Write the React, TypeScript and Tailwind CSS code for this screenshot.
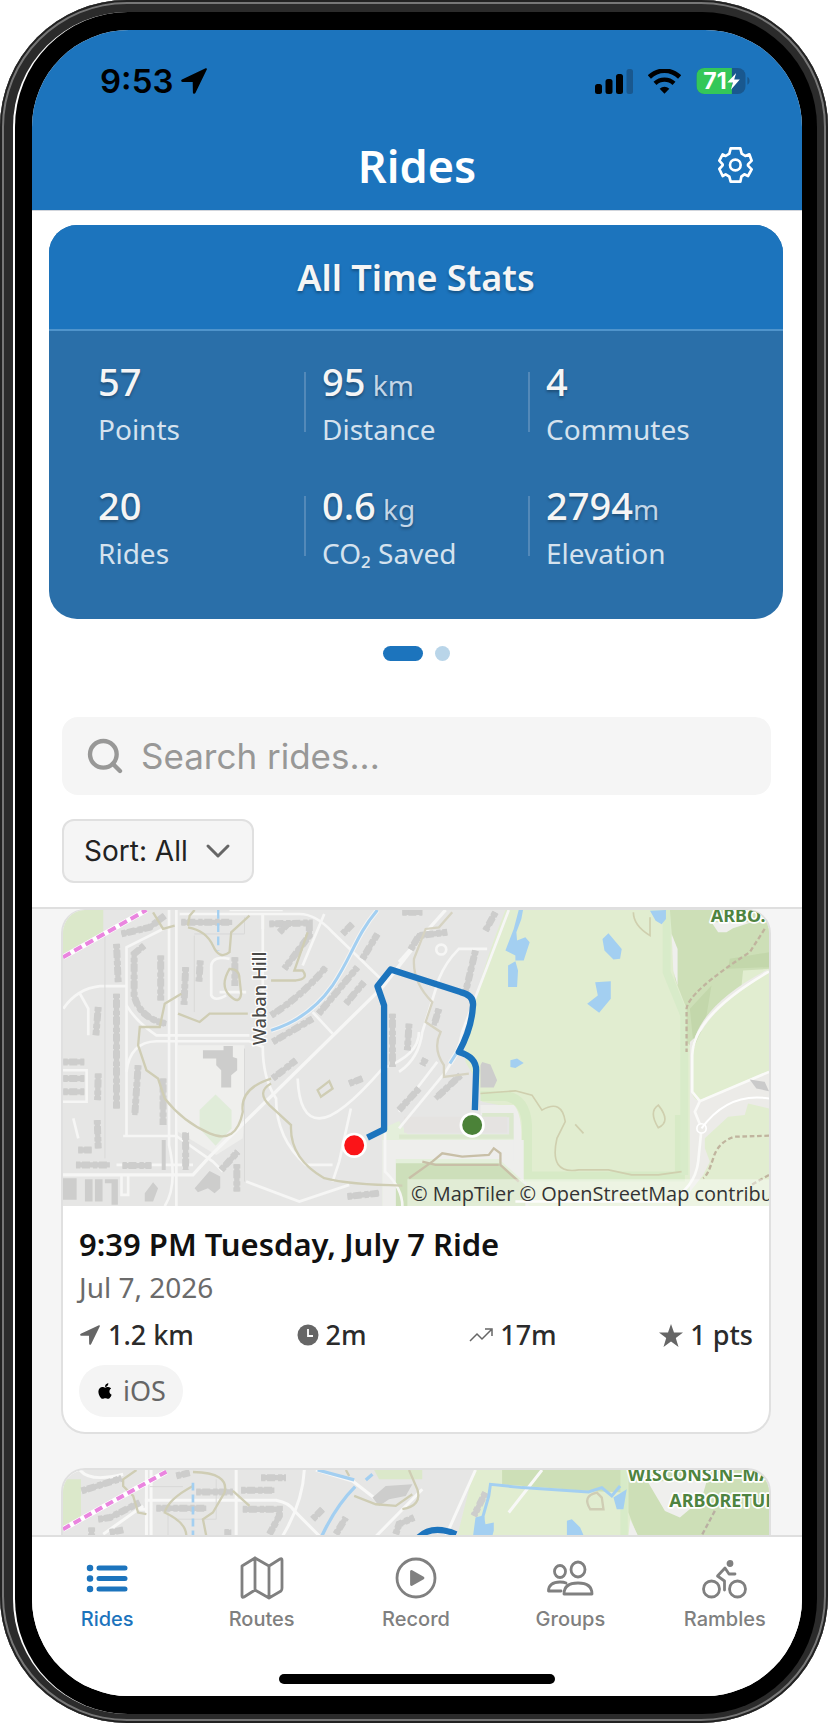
import { ChevronDown, Search } from "lucide-react";
import { FaApple } from "react-icons/fa";
import type { ReactNode } from "react";

const totals = [
  { value: "57", unit: "", label: "Points" },
  { value: "95", unit: " km", label: "Distance" },
  { value: "4", unit: "", label: "Commutes" },
  { value: "20", unit: "", label: "Rides" },
  { value: "0.6", unit: " kg", label: "CO₂ Saved" },
  { value: "2794", unit: "m", label: "Elevation" },
];

function ArrowIcon({ className }: { className?: string }) {
  return (
    <svg viewBox="0 0 26 26" className={className} fill="currentColor">
      <path d="M24.6.3 1 11.4c-1.300.7-1 2.400.5 2.500l10.200.2.200 10.300c0 1.500 1.900 1.900 2.500.6L25.800 1.600c.4-.9-.3-1.700-1.200-1.300Z" />
    </svg>
  );
}

function StatusBar() {
  return (
    <div className="flex h-[102px] items-center justify-between pl-[68px] pr-[52px] text-black">
      <div className="flex items-center gap-[8px]">
        <span className="font-['Inter',sans-serif] text-[33px] font-semibold leading-none">9:53</span>
        <ArrowIcon className="h-[26px] w-[26px]" />
      </div>
      <div className="flex items-center gap-[15px]">
        {/* Signal */}
        <svg viewBox="0 0 38 25" className="h-[25px] w-[38px]">
          <rect x="0" y="15" width="7" height="10" rx="2.500" />
          <rect x="10.500" y="10" width="7" height="15" rx="2.500" />
          <rect x="21" y="5" width="7" height="20" rx="2.500" />
          <rect x="31.500" y="0" width="6.500" height="25" rx="2.500" fill="#19588f" />
        </svg>
        {/* Wifi */}
        <svg viewBox="0 0 99 75" className="h-[25px] w-[33px]">
          <path d="M4 24C30-1 69-1 95 24" fill="none" stroke="black" strokeWidth="14" />
          <path d="M21 43c16-15 41-15 57 0" fill="none" stroke="black" strokeWidth="13" />
          <path d="M35 59c9-8 20-8 29 0L49.500 74Z" />
        </svg>
        {/* Battery */}
        <svg viewBox="0 0 162 79" className="h-[26px] w-[54px]">
          <clipPath id="battery">
            <rect width="150" height="79" rx="24" />
          </clipPath>
          <g clipPath="url(#battery)">
            <rect width="150" height="79" fill="#19588f" />
            <rect width="108" height="79" fill="#34c759" />
          </g>
          <path d="M155 27c9 3 9 21 0 24Z" fill="#19588f" />
          <text x="21" y="64" fill="white" fontFamily="Inter, sans-serif" fontWeight="700" fontSize="70">
            71
          </text>
          <path d="M121 15 94 44h17l-6 22 27-31h-17Z" fill="white" />
        </svg>
      </div>
    </div>
  );
}

function Header() {
  return (
    <header className="shrink-0 border-b border-gray-300 bg-[#1c74bd]">
      <StatusBar />
      <div className="grid h-[78px] grid-cols-3 items-center px-[49px] pb-[12px] text-white">
        <h1 className="col-start-2 text-center text-[45px] font-semibold leading-none">Rides</h1>
        <button aria-label="Settings" className="justify-self-end">
          <svg viewBox="0 0 105 108" className="h-[36px] w-[35px]" fill="none" stroke="currentColor" strokeWidth="8" strokeLinejoin="round">
            <path d="M38 4h29l4 16 11 7 12-5 7 19-11 11v4l11 11-11 20-11-5-9 7-3 15H38l-4-15-11-7-9 5L4 66l10-11v-3L4 41l10-19 9 5 11-7Z" />
            <circle cx="52" cy="54" r="16" />
          </svg>
        </button>
      </div>
    </header>
  );
}

function StatsCard() {
  return (
    <section className="mt-[14px] mr-[19px] ml-[17px] overflow-hidden rounded-[28px] bg-[#2a6fa9] text-[#f5f5f5]">
      <h2 className="border-b-2 border-[#4f94cc] bg-[#1c74bd] pt-[33px] pb-[31px] text-center text-[36px] font-semibold leading-[40px] text-shadow-[0_2px_3px_rgb(0_0_0/0.3)]">
        All Time Stats
      </h2>
      <div className="grid grid-cols-3 gap-y-[30px] px-[31px] pt-[24px] pb-[46px]">
        {totals.map((total, i) => (
          <div key={total.label} className="flex items-center gap-4">
            <span className={i % 3 === 0 ? "h-[60px] w-[2px]" : "h-[60px] w-[2px] bg-[#5389b9]"} />
            <div>
              <p className="h-[54px] text-[38px] leading-[52px] font-medium text-shadow-[0_2px_3px_rgb(0_0_0/0.3)]">
                {total.value}
                <span className="text-[28px] font-normal whitespace-pre text-[#c3d6e7]">{total.unit}</span>
              </p>
              <p className="h-[40px] text-[28px] leading-[40px] text-[#d5e2ee]">{total.label}</p>
            </div>
          </div>
        ))}
      </div>
    </section>
  );
}

function Filters() {
  return (
    <div className="border-b-2 border-[#dfdfdf] pr-[31px] pb-[24px] pl-[30px] font-['Inter',sans-serif]">
      <label className="flex h-[78px] items-center gap-[16px] rounded-2xl bg-[#f5f5f5] px-[23px] text-[#989897]">
        <Search className="size-[40px]" strokeWidth={2.6} />
        <input
          type="text"
          aria-label="Search rides"
          placeholder="Search rides..."
          className="min-w-0 flex-1 bg-transparent text-[35px] leading-none outline-none placeholder:text-[#989897]"
        />
      </label>
      <div className="relative mt-[24px] w-[192px]">
        <select
          aria-label="Sort rides"
          className="h-[64px] w-full appearance-none rounded-xl border-2 border-[#e0e0e0] bg-[#f5f5f5] pl-[20px] text-[28px] text-[#222]"
        >
          <option>Sort: All</option>
          <option>Sort: Newest</option>
        </select>
        <ChevronDown className="pointer-events-none absolute top-3 right-4 size-[40px] text-[#666]" strokeWidth={1.8} />
      </div>
    </div>
  );
}

// Building rows: a solid core with a dashed, wider stroke gives the ragged outline
function Buildings({ d }: { d: string }) {
  return (
    <g fill="none" stroke="#cdcdcc">
      <path d={d} strokeWidth="16" />
      <path d={d} strokeWidth="21" strokeDasharray="13 5 24 9" />
    </g>
  );
}

function RideMap() {
  return (
    <svg viewBox="39 33 2124 891" className="block w-full" preserveAspectRatio="xMidYMid slice">
      <rect x="39" y="33" width="2124" height="891" fill="#e6e6e5" />
      <path d="M385 440H585V640L580 720 500 770 385 700Z" fill="#efefed" />
      <path d="M39 33H160V98L39 165Z" fill="#dbe8ca" />
      <path d="M498 588 546 635V690L498 742 450 690V635Z" fill="#e0ecd9" />

      {/* Parkland */}
      <path d="M1000 690 1050 668 1075 708H1425V924H1000Z" fill="#e4efdb" />
      <path d="M1370 33H2163V924H1440L1425 780 1400 630 1300 610 1290 560 1250 490Q1240 430 1272 330Q1310 180 1370 33Z" fill="#e1edd0" />
      <path d="M1295 593H1370Q1430 600 1435 680V835H1895V650" fill="none" stroke="#d7eac6" strokeWidth="30" />
      <path d="M1855 33V220L1908 350V830" fill="none" stroke="#d8ebc9" strokeWidth="24" />
      <path d="M1865 33H2163V210L2085 215 2080 265 1985 360 1935 450 1915 430V330L1880 240Z" fill="#cddfb7" />
      <path d="M2045 180 2163 160V205L2040 210ZM1925 330 1990 260 1975 350 1935 430Z" fill="#c3d7ab" />
      <path d="M1870 105 1888 150V260L1875 215ZM1990 70H2110L2055 88 2035 100H2010Z" fill="#efefed" />
      <path d="M1040 795H1350L1430 860V924H1040Z" fill="#cddfba" />
      <path d="M1000 725H1425V850L1350 782H1040V924H1000Z" fill="#eeeeec" />
      <path d="M1295 620H1395Q1415 640 1418 700V790H1395V650H1295Z" fill="#eeeeec" />
      <path d="M1300 650H1388V715H1050" fill="none" stroke="#dbe8ce" strokeWidth="13" />
      <path d="M1065 655H1375V703H1065Z" fill="#e5e3e1" />

      {/* Eastern roads */}
      <path d="M2163 210Q1930 330 1928 480V570Q1935 610 1955 605L2163 517V630L2100 615 2090 650 2040 655 1970 720V750L1985 790 1965 830 1910 900H1925V430Z" fill="#ecebe8" />
      <path d="M2163 222Q1945 350 1936 470V570L1955 600 2163 512Z" fill="#e1edd0" />
      <path d="M2163 218Q1935 350 1932 470V580L1955 608 2163 520M1955 608 1940 640 1960 690 1950 790Q1940 870 1860 910H1400" fill="none" stroke="#fafaf8" strokeWidth="8" />
      <circle cx="1960" cy="690" r="14" fill="#ecebe8" stroke="white" strokeWidth="5" />
      <path d="M1960 690Q2040 580 2163 600" fill="none" stroke="white" strokeWidth="6" />
      <path d="M2105 543 2150 550 2163 578 2125 570Z" fill="#cacaca" />

      {/* Local streets */}
      <g fill="none" stroke="#f6f6f5" strokeWidth="8">
        <path d="M358 33V740Q385 860 345 924M380 33V924" />
        <path d="M230 713V145L340 90M390 45H750Q800 45 850 100L1000 245M640 45V430" />
        <path d="M40 330Q80 270 150 262H230M90 285 115 330V410M230 320Q260 370 320 410H600M230 520Q240 430 320 428H600L640 445Q640 540 680 600Q680 720 770 800H850" />
        <path d="M1110 125 1000 265M1000 265 480 775 430 830H39M1190 33 1050 190" strokeWidth="10" />
        <path d="M220 713H380L490 790 520 820M485 200V290Q495 310 530 290M485 200Q490 170 540 180M510 280H590M640 90V45" />
        <path d="M745 540Q750 660 810 660T1000 510Q1110 470 1110 400M905 630 870 790 850 850M590 850 750 910 900 860M825 45 760 200M790 340 850 405M1008 700V820Q1060 870 1060 924" />
        <path d="M39 515H110V610H39M70 660 85 720M215 830V890H235V830M200 800H430M540 33 700 33" />
        <path d="M1380 33 1240 400Q1230 460 1190 520L1050 690M1165 490 1050 640M1315 150H1230Q1190 190 1170 240L1120 400Q1110 480 1050 520" />
        <circle cx="1177" cy="152" r="15" />
      </g>
      <path d="M165 110V780M434 110V340M434 105H585V55M585 450V850" fill="none" stroke="#d9d9d8" strokeWidth="3" />

      <Buildings d="M200 135 205 250M200 285V630M283 140 253 165V290Q270 360 350 375M333 170V305M215 105 300 85 345 50M395 70H548M408 205 403 318M452 185 448 248M556 175V262M660 75 780 72V110L705 210M145 325 138 410M145 525 143 605M142 665 145 750M340 540V680M265 500 255 650" />
      <Buildings d="M665 350Q760 290 830 205M670 430 790 360M808 345 925 205M890 315 945 250M880 105 910 75M940 180 985 105M690 100 720 70M40 490H103M40 540H103M40 580H103M85 755H125M78 800H180M218 802H305M398 712H418M408 712V815M515 815 565 760M562 798V880" />
      <Buildings d="M895 895 990 885M900 555 940 540M1030 345V505M1080 375 1075 455M1110 570 1050 635M670 540 740 485M1085 152 1110 110 1195 100M1280 155 1250 280M1340 40 1310 95M1170 330 1155 380M1130 480 1120 500M1235 530 1160 600M1060 40H1120" />
      <path d="M460 455H522V442H550V475L563 480V515L545 530V567H515V515L500 500V480H460ZM435 870 480 818 512 835V870L495 885 475 870 445 882ZM39 840H80V905H39ZM105 843H128V910H105ZM135 843H158V910H135ZM165 843H204V920H185V855H165ZM285 910V885L310 852 325 870 310 910ZM336 725H348V815H336ZM1300 490 1325 498 1345 545 1335 567H1295V500Z" fill="#cdcdcc" />

      {/* Footpaths */}
      <g fill="none" stroke="#cfcdb4" strokeWidth="7">
        <path d="M310 40 340 90 375 80M415 80 420 50 435 33M415 85Q470 95 490 140T540 160L545 100 600 50M385 345 450 370 480 345H595M665 245H740Q780 240 760 215H735L775 100M395 285 345 315 330 385H270L265 440 290 515 325 540 345 600Q400 670 480 705T580 640Q570 570 665 540M665 555Q620 580 660 620L725 680Q720 780 825 840Q900 860 1060 862M540 210Q510 260 540 290T575 285L570 240Q570 210 540 210ZM840 548 805 575 815 595 850 570Z" />
        <path d="M1210 40 1170 85 1130 90 1095 180Q1090 250 1150 310L1130 370 1175 400Q1150 450 1185 500V535L1260 525" stroke="#d6d3c2" />
        <path d="M1295 585 1400 577 1450 590 1480 635Q1540 600 1550 670L1525 720Q1500 830 1590 815H1680L1750 830H1830L1900 820" stroke="#cfcfae" strokeWidth="5" />
        <path d="M1755 40Q1755 80 1805 110V55M1830 620Q1800 640 1830 688Q1870 670 1830 620ZM1580 678 1605 705" stroke="#cfcfae" strokeWidth="5" />
        <path d="M1080 840 1150 790M1150 790 1180 765 1240 775 1320 770 1335 750 1355 765V800L1410 850M1120 790 1160 800H1350" stroke="#c8bfa7" />
        <path d="M2150 90 2105 160Q1920 280 1915 330V460M2163 712 2060 715Q2010 730 1995 780T1965 840M2163 830 2110 860" stroke="#c0b49e" strokeDasharray="14 8" />
      </g>

      {/* Water */}
      <path d="M1410 33H1423L1418 60 1403 100 1405 125 1430 115 1443 130 1425 185H1400V170L1370 155 1395 90ZM1378 200 1400 187 1408 215 1405 265H1378ZM1680 103 1720 150 1715 180 1695 182 1668 155 1662 120ZM1640 250 1687 247V300L1652 342 1616 315 1648 290ZM1385 485 1405 480 1425 493 1400 508 1385 505ZM1805 35 1853 33V60L1840 76 1822 65Z" fill="#a3cff1" />
      <path d="M506 33V155" stroke="#a3cff1" strokeWidth="7" strokeDasharray="26 14" />
      <path d="M985 33C920 110 910 170 850 260Q780 360 665 395M1225 460 1203 495" fill="none" stroke="#f4f4f3" strokeWidth="15" />
      <path d="M985 33C920 110 910 170 850 260Q780 360 665 395M1225 460 1203 495" fill="none" stroke="#a3cff1" strokeWidth="9" />

      {/* Bike path */}
      <path d="M39 175 290 33" stroke="white" strokeWidth="16" />
      <path d="M39 175 290 33" stroke="#ea85df" strokeWidth="12" strokeDasharray="26 13" />

      <g fontFamily="'Noto Sans', sans-serif" paintOrder="stroke" stroke="white" strokeLinejoin="round">
        <text transform="translate(650 440) rotate(-90)" fontSize="55" fontWeight="500" fill="#4a4a48" strokeWidth="8">
          Waban Hill
        </text>
        <text x="1988" y="68" fontSize="54" fontWeight="700" fill="#4e8440" strokeWidth="10">
          ARBO.
        </text>
      </g>

      <path d="M955 718 1005 693V320L985 262 1025 212 1235 280Q1278 290 1272 325Q1268 390 1230 460Q1282 475 1282 515L1278 635" fill="none" stroke="#1c74bd" strokeWidth="19" strokeLinejoin="round" />
      <circle cx="915" cy="741" r="34" fill="#fb1418" stroke="white" strokeWidth="8" />
      <circle cx="1270" cy="680" r="34" fill="#4b8238" stroke="white" strokeWidth="8" />

      <rect x="1075" y="843" width="1088" height="81" fill="white" fillOpacity="0.4" />
      <text x="1086" y="908" fontFamily="'Open Sans', 'Noto Sans', sans-serif" fontSize="60" fill="#333">
        © MapTiler © OpenStreetMap contribu
      </text>
    </svg>
  );
}

function NextRideMap() {
  return (
    <svg viewBox="39 42 2124 891" className="block w-full" preserveAspectRatio="xMidYMid slice">
      <rect x="39" y="42" width="2124" height="891" fill="#e6e6e5" />
      <path d="M39 70H93V185L39 215ZM975 42H1120V70H990Z" fill="#dbe8ca" />
      <path d="M1275 42H2163V300H1200L1225 242Z" fill="#e1edd0" />
      <path d="M1360 42H1730V110L1620 105 1360 85ZM1740 42H2163V300H1790L1740 170Z" fill="#cddfb7" />
      <path d="M1727 42V300" stroke="#d7ebc8" strokeWidth="22" />
      <path d="M1800 80 1980 60 1960 130 1895 185 1850 165ZM1745 190 1770 242H1740Z" fill="#efefed" />

      {/* Streets */}
      <g fill="none" stroke="#f8f8f7" strokeWidth="9">
        <path d="M290 42V300M304 42V300M285 133H680Q720 140 735 165L810 240M560 42V240M765 42Q760 140 700 240M800 42 910 75 1000 145M1120 100 980 242M1280 42 1190 242M270 160H290M160 235 280 150M90 42Q120 80 220 55M1480 42 1380 170" />
      </g>
      <path d="M300 92H400M355 160V240M500 70V190H380" fill="none" stroke="#d9d9d8" strokeWidth="3" />

      <Buildings d="M95 105 215 67M145 190 180 185 270 140M440 108H550M575 103H675M320 157H470M580 160H690V180L660 235M635 65H710M380 60 420 50M180 230 220 222M125 215V240M790 190 820 160M860 235 890 185M1040 235 1050 205 1095 185M1310 110 1275 180M525 230H545" />
      <path d="M970 125 1010 90 1090 85 1070 120 1020 130 990 150Z" fill="#cdcdcc" />

      {/* Footpaths */}
      <g fill="none" stroke="#cfcdb4" strokeWidth="7">
        <path d="M260 42 220 70V90L250 120 265 170 290 175M430 48Q540 50 525 110L490 170 460 190 470 240M410 240Q410 200 345 170 355 130 430 90M550 105 600 150M890 42 900 60M915 120 980 145 1040 150 1090 115M1080 42 1105 100Q1120 150 1060 160" />
        <path d="M1645 110Q1600 120 1625 160H1665L1660 125Z" />
        <path d="M2000 165 1960 240" stroke="#b9afa2" strokeDasharray="14 8" />
      </g>

      {/* Water */}
      <path d="M430 80V240" stroke="#a3cff1" strokeWidth="8" strokeDasharray="24 12" />
      <path d="M918 92Q860 150 818 240M805 42 915 72M950 72 970 55" fill="none" stroke="#a3cff1" strokeWidth="10" />
      <path d="M1300 220 1303 180 1320 120 1325 85 1420 95 1620 108 1660 95 1690 120 1715 90" fill="none" stroke="#a3cff1" strokeWidth="9" />
      <path d="M1280 185 1305 178 1310 205 1335 200V225L1325 260H1270ZM1555 195 1570 190 1595 215 1610 250H1555ZM1695 125 1735 100 1725 160H1705Z" fill="#a3cff1" />

      {/* Bike path */}
      <path d="M39 220 350 47" stroke="white" strokeWidth="16" />
      <path d="M39 220 350 47" stroke="#ea85df" strokeWidth="12" strokeDasharray="24 13" />

      <path d="M1108 245Q1150 205 1222 235" fill="none" stroke="#1c74bd" strokeWidth="18" />

      <g fontFamily="'Noto Sans', sans-serif" fontWeight="700" fontSize="54" fill="#4e8440" stroke="white" strokeWidth="10" strokeLinejoin="round" paintOrder="stroke">
        <text x="1738" y="76">WISCONSIN–MA</text>
        <text x="1863" y="153">ARBORETUM</text>
      </g>
    </svg>
  );
}

function Metric({ icon, children }: { icon: ReactNode; children: ReactNode }) {
  return (
    <li className="flex items-center gap-[7px] text-[#666]">
      {icon}
      <span className="text-[27px] leading-[36px] font-medium text-[#2b2b2b]">{children}</span>
    </li>
  );
}

function RideList() {
  return (
    <main className="flex min-h-0 flex-1 flex-col gap-[34px] overflow-hidden bg-[#f5f5f5] pr-[31px] pl-[29px]">
      <article className="shrink-0 overflow-hidden rounded-3xl border-2 border-t border-[#e0e0e0] bg-white">
        <RideMap />
        <div className="px-4 pt-[16px] pb-[15px]">
          <h3 className="text-[31px] leading-[44px] font-semibold text-[#111]">9:39 PM Tuesday, July 7 Ride</h3>
          <p className="text-[28px] leading-[42px] text-[#6b6b6b]">Jul 7, 2026</p>
          <ul className="mt-[9px] flex justify-between">
            <Metric icon={<ArrowIcon className="h-[20px] w-[22px]" />}>1.2 km</Metric>
            <Metric
              icon={
                <svg viewBox="0 0 22 22" className="size-[22px]">
                  <circle cx="11" cy="11" r="10.500" fill="currentColor" />
                  <path d="M11 5v7h5" fill="none" stroke="white" strokeWidth="1.800" />
                </svg>
              }
            >
              2m
            </Metric>
            <Metric
              icon={
                <svg viewBox="0 0 24 14" className="h-[14px] w-[24px]" fill="none" stroke="currentColor" strokeWidth="1.500">
                  <path d="M1 13 8 6l5 5 9-9M16 1h7v7" />
                </svg>
              }
            >
              17m
            </Metric>
            <Metric
              icon={
                <svg viewBox="0 0 24 23" className="h-[23px] w-[24px]" fill="currentColor">
                  <path d="m12 0 3 8.500h9l-7.200 5.400L19.500 23 12 17.500 4.500 23l2.700-9.100L0 8.500h9Z" />
                </svg>
              }
            >
              1 pts
            </Metric>
          </ul>
          <span className="mt-[12px] inline-flex h-[52px] items-center gap-[9px] rounded-full bg-[#f4f4f4] px-[17px] text-[27px] text-[#666]">
            <FaApple className="size-[18px] text-black" />
            iOS
          </span>
        </div>
      </article>
      <article className="shrink-0 overflow-hidden rounded-3xl border-2 border-[#e0e0e0] bg-white">
        <NextRideMap />
      </article>
    </main>
  );
}

const tabs = [
  {
    name: "Rides",
    icon: (
      <>
        <path d="M14 12h26M14 22.500h26M14 33h26" strokeWidth="5" />
        <path d="M5 12h.01M5 22.500h.01M5 33h.01" strokeWidth="6.500" />
      </>
    ),
  },
  {
    name: "Routes",
    icon: <path d="M2 10 15 2l14 8 11-7q2-1 2 1v28q0 2-1 3l-12 7-14-8-11 7q-2 1-2-1ZM15 2v32M29 10v32" />,
  },
  {
    name: "Record",
    icon: (
      <>
        <circle cx="22" cy="22" r="19" />
        <path d="M17.500 15.500v13L29 22Z" fill="currentColor" />
      </>
    ),
  },
  {
    name: "Groups",
    icon: (
      <>
        <ellipse cx="12" cy="15.500" rx="5.500" ry="6" />
        <ellipse cx="30" cy="13.500" rx="7" ry="7.500" />
        <path d="M13 35H0.500q0-9 11.500-9 4 0 6 1M16 38q0-11 14-11t14 11Z" />
      </>
    ),
  },
  {
    name: "Rambles",
    icon: (
      <>
        <circle cx="8.500" cy="33" r="8" />
        <circle cx="34.500" cy="33" r="8" />
        <circle cx="27" cy="7.500" r="2" fill="currentColor" />
        <path d="M21.500 34V25L14.500 20l7.500-8 4 6h6" />
      </>
    ),
  },
];

function TabBar() {
  return (
    <footer className="shrink-0 border-t-2 border-[#dfdfdf] bg-white pb-[12px] font-['Inter',sans-serif]">
      <nav className="-ml-[2px] grid grid-cols-5">
        {tabs.map((tab, i) => (
          <a
            key={tab.name}
            href="#"
            className={
              i === 0
                ? "flex flex-col items-center pt-[19px] text-[#1c74bd]"
                : "flex flex-col items-center pt-[19px] text-[#808080]"
            }
          >
            <svg
              viewBox="0 0 44 44"
              className="size-[44px] overflow-visible"
              fill="none"
              stroke="currentColor"
              strokeWidth="2.800"
              strokeLinecap="round"
              strokeLinejoin="round"
            >
              {tab.icon}
            </svg>
            <span className="mt-[5px] text-[20px] leading-[28px] font-medium">{tab.name}</span>
          </a>
        ))}
      </nav>
      <div className="mx-auto mt-[41px] h-[10px] w-[276px] rounded-full bg-black" />
    </footer>
  );
}

export default function App() {
  return (
    <div className="h-screen bg-white font-['Noto_Sans',sans-serif]">
      {/* Phone frame */}
      <div className="h-full rounded-[127px] bg-[#2b2b2b] pt-[12px] pr-[11px] pb-[9px] pl-[13px] shadow-[inset_0_0_0_2px_#222,inset_0_0_0_4px_#777]">
        <div className="h-full rounded-[115px] border-l-2 border-white bg-black pt-[18px] pr-[15px] pb-[18px] pl-[17px]">
          <div className="flex h-full flex-col overflow-hidden rounded-[97px] bg-white">
            <Header />
            <StatsCard />
            {/* Carousel dots */}
            <div className="flex justify-center gap-[12px] pt-[27px] pr-[2px] pb-[56px]">
              <span className="h-[15px] w-[40px] rounded-full bg-[#1c74bd]" />
              <span className="size-[15px] rounded-full bg-[#b9d5e9]" />
            </div>
            <Filters />
            <RideList />
            <TabBar />
          </div>
        </div>
      </div>
    </div>
  );
}
